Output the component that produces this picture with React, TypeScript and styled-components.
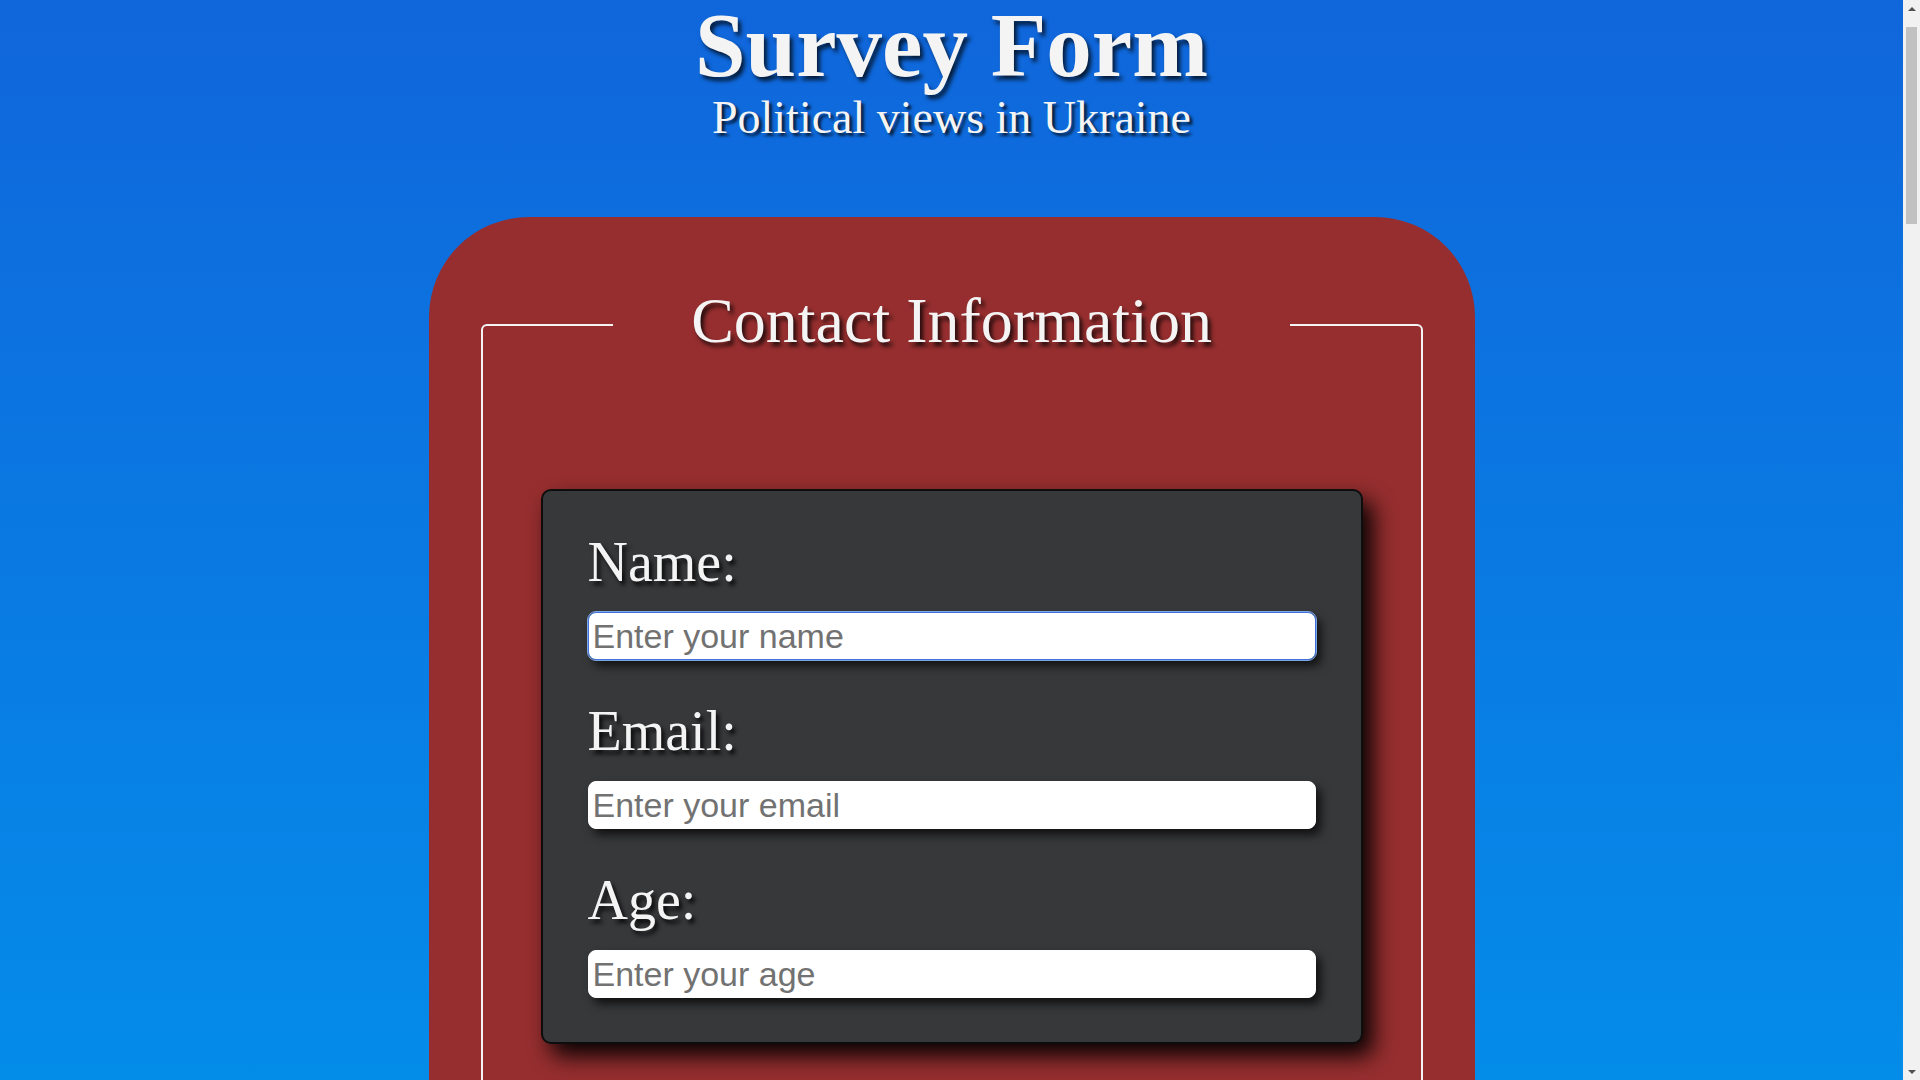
import React from "react";
import styled, { createGlobalStyle } from "styled-components";

const GlobalStyle = createGlobalStyle`
  html, body {
    margin: 0;
    padding: 0;
  }
  body {
    font-family: "Liberation Serif", "Times New Roman", serif;
    background: linear-gradient(180deg, #1066db 0%, #048ce9 100%);
    background-attachment: fixed;
    color: #f5f5f5;
  }
`;

const Page = styled.div`
  display: flex;
  flex-direction: column;
  align-items: center;
  padding-right: 17px;
  padding-bottom: 60px;
`;

const Header = styled.header`
  display: flex;
  flex-direction: column;
  align-items: center;
`;

const Title = styled.h1`
  margin: 0;
  font-size: 91px;
  line-height: 1;
  font-weight: 700;
  color: #f4f4f4;
  text-shadow: 3px 4px 4px rgba(0, 0, 0, 0.75);
`;

const Subtitle = styled.h2`
  margin: 4px 0 0;
  font-size: 46px;
  line-height: 1;
  font-weight: 400;
  color: #f4f4f4;
  text-shadow: 3px 3px 3px rgba(0, 0, 0, 0.75);
`;

const Card = styled.form`
  box-sizing: border-box;
  width: 1046px;
  min-height: 5400px;
  margin-top: 76px;
  padding: 72px 52px 60px;
  background: #962e2f;
  border-radius: 100px 100px 0 0;
`;

const Fieldset = styled.fieldset`
  margin: 0;
  padding: 129px 58px 60px;
  border: 2px solid #f4f4f4;
  border-radius: 6px;
`;

const Legend = styled.legend`
  margin: 0 auto;
  padding: 0 78px 7px;
  font-size: 64px;
  line-height: 1;
  color: #f4f4f4;
  text-shadow: 3px 4px 4px rgba(0, 0, 0, 0.8);
`;

const Panel = styled.div`
  box-sizing: border-box;
  width: 822px;
  margin: 0 auto;
  padding: 43px 45px 44px;
  display: flex;
  flex-direction: column;
  gap: 43px;
  background: #37383a;
  border: 2px solid #0d0d0d;
  border-radius: 10px;
  box-shadow: 10px 12px 22px rgba(0, 0, 0, 0.95);
`;

const Field = styled.div`
  display: flex;
  flex-direction: column;
  gap: 22px;
`;

const Label = styled.label`
  display: block;
  font-size: 56px;
  line-height: 1;
  color: #f4f4f4;
  text-shadow: 3px 4px 4px rgba(0, 0, 0, 0.85);
`;

const Input = styled.input<{ $focused?: boolean }>`
  box-sizing: border-box;
  width: 100%;
  height: 48px;
  padding: 0 4px;
  font-family: "Liberation Sans", Arial, sans-serif;
  font-size: 34px;
  color: #222;
  background: #ffffff;
  border: 1px solid ${(p) => (p.$focused ? "#3f74d4" : "#ffffff")};
  outline: ${(p) => (p.$focused ? "1px solid #7fa6ea" : "none")};
  border-radius: 8px;
  box-shadow: 5px 6px 10px rgba(0, 0, 0, 0.7);

  &::placeholder {
    color: #727272;
  }
`;

const ScrollTrack = styled.div`
  position: fixed;
  top: 0;
  right: 0;
  width: 17px;
  height: 100vh;
  background: #f1f1f1;
  display: flex;
  flex-direction: column;
  align-items: center;
`;

const ScrollArrow = styled.div<{ $down?: boolean }>`
  width: 17px;
  height: 17px;
  display: flex;
  align-items: center;
  justify-content: center;
  margin-top: ${(p) => (p.$down ? "auto" : "0")};
  &::after {
    content: "";
    width: 0;
    height: 0;
    border-left: 4px solid transparent;
    border-right: 4px solid transparent;
    ${(p) =>
      p.$down ? "border-top: 4px solid #505050;" : "border-bottom: 4px solid #505050;"}
  }
`;

const ScrollThumb = styled.div`
  width: 11px;
  height: 197px;
  margin-top: 10px;
  background: #c1c1c1;
`;

export default function App() {
  return (
    <>
      <GlobalStyle />
      <Page>
        <Header>
          <Title>Survey Form</Title>
          <Subtitle>Political views in Ukraine</Subtitle>
        </Header>
        <Card onSubmit={(e) => e.preventDefault()}>
          <Fieldset>
            <Legend>Contact Information</Legend>
            <Panel>
              <Field>
                <Label htmlFor="name">Name:</Label>
                <Input id="name" type="text" placeholder="Enter your name" $focused />
              </Field>
              <Field>
                <Label htmlFor="email">Email:</Label>
                <Input id="email" type="email" placeholder="Enter your email" />
              </Field>
              <Field>
                <Label htmlFor="age">Age:</Label>
                <Input id="age" type="number" placeholder="Enter your age" />
              </Field>
            </Panel>
          </Fieldset>
        </Card>
      </Page>
      <ScrollTrack aria-hidden="true">
        <ScrollArrow />
        <ScrollThumb />
        <ScrollArrow $down />
      </ScrollTrack>
    </>
  );
}
